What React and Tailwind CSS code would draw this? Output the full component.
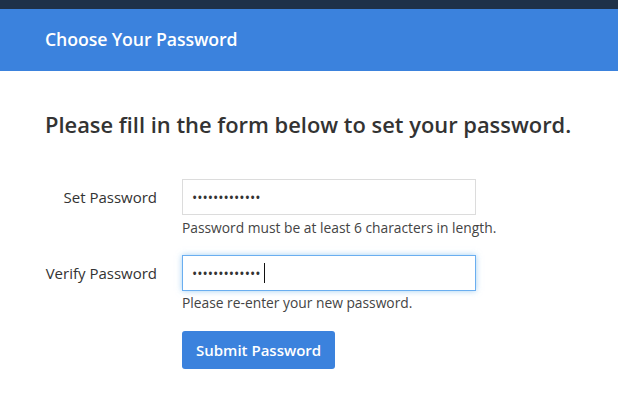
export default function App() {
  return (
    <div className="w-[618px] h-[408px] bg-white overflow-hidden font-['Open_Sans',sans-serif] text-[#333]">
      <div className="h-[9px] bg-[#1e3149]" />
      <div className="h-[62px] bg-[#3b82dd] flex items-center px-[45px]">
        <h1 className="text-[17.7px] font-semibold text-white leading-none tracking-[-0.1px]">Choose Your Password</h1>
      </div>
      <div className="px-[45px] pt-[39px]">
        <h2 className="text-[21.9px] font-semibold leading-[30px] text-[#333] whitespace-nowrap">Please fill in the form below to set your password.</h2>
        <div className="mt-[39px] flex flex-col">
          <div className="flex">
            <label className="w-[112px] h-[36px] flex items-center justify-end text-[15px] text-[#333]">Set Password</label>
            <div className="ml-[25px] flex flex-col">
              <input
                type="password"
                readOnly
                value="aaaaaaaaaaaaa"
                className="w-[294px] h-[36px] border border-[#dcdcdc] px-[9px] text-[14px] text-[#333] outline-none"
              />
              <p className="mt-[3px] text-[13.8px] leading-[20px] text-[#444] whitespace-nowrap">Password must be at least 6 characters in length.</p>
            </div>
          </div>
          <div className="flex mt-[17px]">
            <label className="w-[112px] h-[36px] flex items-center justify-end text-[15px] text-[#333]">Verify Password</label>
            <div className="ml-[25px] flex flex-col">
              <div className="relative">
                <input
                  type="password"
                  readOnly
                  value="aaaaaaaaaaaaa"
                  className="w-[294px] h-[36px] border border-[#6aaef0] px-[9px] text-[14px] text-[#333] outline-none shadow-[0_0_6px_rgba(102,175,233,0.6)]"
                />
                <span className="absolute left-[82px] top-[8px] w-[1px] h-[20px] bg-[#111]" />
              </div>
              <p className="mt-[2px] text-[13.8px] leading-[20px] text-[#444]">Please re-enter your new password.</p>
            </div>
          </div>
          <div className="flex mt-[18px]">
            <div className="w-[112px]" />
            <button className="ml-[25px] h-[38px] px-[14px] rounded-[3px] bg-[#3b82dd] text-white text-[15px] font-semibold">Submit Password</button>
          </div>
        </div>
      </div>
    </div>
  );
}
